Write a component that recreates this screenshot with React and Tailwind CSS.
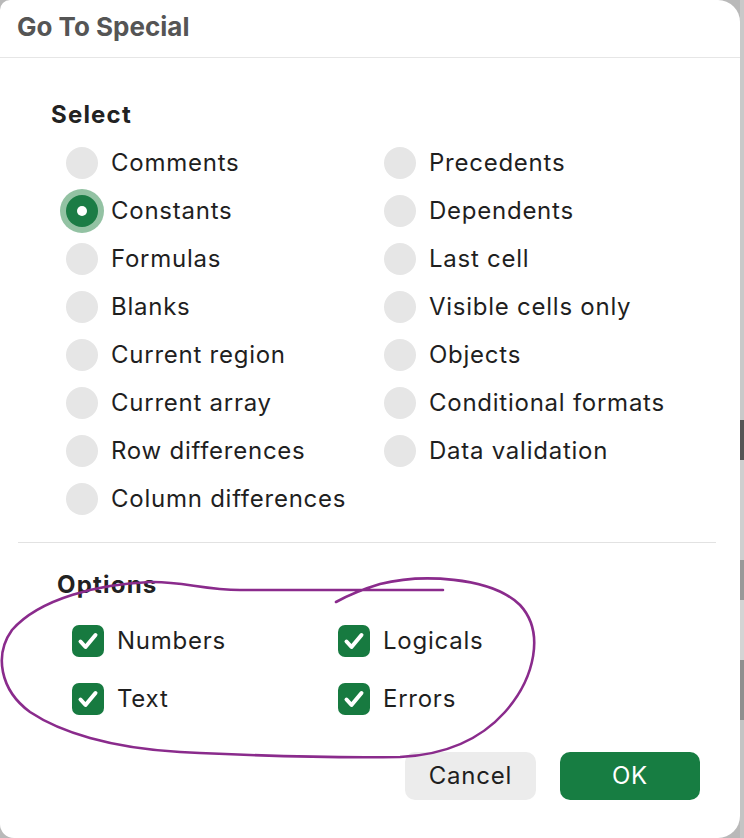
import React from "react";

const leftItems = [
  "Comments",
  "Constants",
  "Formulas",
  "Blanks",
  "Current region",
  "Current array",
  "Row differences",
  "Column differences",
];
const rightItems = [
  "Precedents",
  "Dependents",
  "Last cell",
  "Visible cells only",
  "Objects",
  "Conditional formats",
  "Data validation",
];

function Radio({ label, selected }) {
  return (
    <div className="flex h-[48px] items-center">
      {selected ? (
        <div className="flex h-[32px] w-[32px] items-center justify-center rounded-full bg-[#1b7c45] shadow-[0_0_0_6px_#93c2a3]">
          <div className="h-[10px] w-[10px] rounded-full bg-white" />
        </div>
      ) : (
        <div className="h-[32px] w-[32px] rounded-full bg-[#e6e6e6]" />
      )}
      <span className="ml-[13px] text-[24px] leading-[30px] tracking-[0.75px] text-[#1f1f1f]">{label}</span>
    </div>
  );
}

function Check({ label }) {
  return (
    <div className="flex h-[32px] items-center">
      <div className="flex h-[32px] w-[32px] items-center justify-center rounded-[7px] bg-[#177a40]">
        <svg width="32" height="32" viewBox="0 0 32 32">
          <path d="M8.5 16.5 L13.5 22 L23.5 10" fill="none" stroke="white" strokeWidth="4" strokeLinecap="round" strokeLinejoin="round" />
        </svg>
      </div>
      <span className="ml-[13px] text-[24px] leading-[30px] tracking-[0.75px] text-[#1f1f1f]">{label}</span>
    </div>
  );
}

export default function App() {
  return (
    <div className="flex h-[838px] w-[744px] bg-[#b9b9b9]" style={{ fontFamily: "Inter, 'Liberation Sans', sans-serif" }}>
      <div className="relative flex h-[838px] w-[740px] flex-col rounded-tl-[10px] rounded-bl-[14px] rounded-tr-[22px] rounded-br-[22px] bg-white">
        <div className="h-[57px] pl-[17px] pt-[12px]">
          <div className="text-[26px] font-bold leading-[30px] text-[#555555]">Go To Special</div>
        </div>
        <div className="h-px w-full bg-[#e6e6e6]" />
        <div className="pl-[51px] pt-[42px]">
          <div className="text-[24px] font-bold leading-[30px] tracking-[1.2px] text-[#222222]">Select</div>
        </div>
        <div className="mt-[9px] grid grid-cols-[318px_1fr] pl-[66px]">
          <div className="flex flex-col">
            {leftItems.map((t) => (
              <Radio key={t} label={t} selected={t === "Constants"} />
            ))}
          </div>
          <div className="flex flex-col">
            {rightItems.map((t) => (
              <Radio key={t} label={t} />
            ))}
          </div>
        </div>
        <div className="ml-[18px] mt-[19px] h-px w-[698px] bg-[#e2e2e2]" />
        <div className="pl-[57px] pt-[27px]">
          <div className="text-[24px] font-bold leading-[30px] tracking-[1.2px] text-[#222222]">Options</div>
        </div>
        <div className="mt-[25px] grid grid-cols-[266px_1fr] gap-y-[26px] pl-[72px]">
          <Check label="Numbers" />
          <Check label="Logicals" />
          <Check label="Text" />
          <Check label="Errors" />
        </div>
        <div className="mt-[37px] flex justify-end gap-[24px] pr-[40px]">
          <button className="h-[48px] w-[131px] rounded-[10px] bg-[#ececec] text-[24px] tracking-[0.8px] text-[#1f1f1f]">Cancel</button>
          <button className="h-[48px] w-[140px] rounded-[10px] bg-[#177d42] text-[24px] tracking-[0.8px] text-white">OK</button>
        </div>
        <svg className="pointer-events-none absolute left-0 top-0" width="740" height="838" viewBox="0 0 740 838">
          <path
            d="M443 590 L240 590 C205 590 180 581 150 582 C100 584 40 598 12 630 C-6 655 0 690 30 712 C60 732 110 748 180 752 C260 756 340 758 400 757 C445 755 480 740 505 712 C535 678 545 632 520 605 C490 576 420 574 380 584 C360 590 345 597 336 602"
            fill="none"
            stroke="#8a2b8c"
            strokeWidth="2.6"
            strokeLinecap="round"
          />
        </svg>
      </div>
      <div className="flex w-[4px] flex-col">
        <div className="h-[420px] bg-[#c9c9c9]" />
        <div className="h-[40px] bg-[#555555]" />
        <div className="h-[100px] bg-[#cfcfcf]" />
        <div className="h-[40px] bg-[#999999]" />
        <div className="h-[60px] bg-[#d4d4d4]" />
        <div className="h-[60px] bg-[#8f8f8f]" />
        <div className="flex-1 bg-[#c4c4c4]" />
      </div>
    </div>
  );
}
